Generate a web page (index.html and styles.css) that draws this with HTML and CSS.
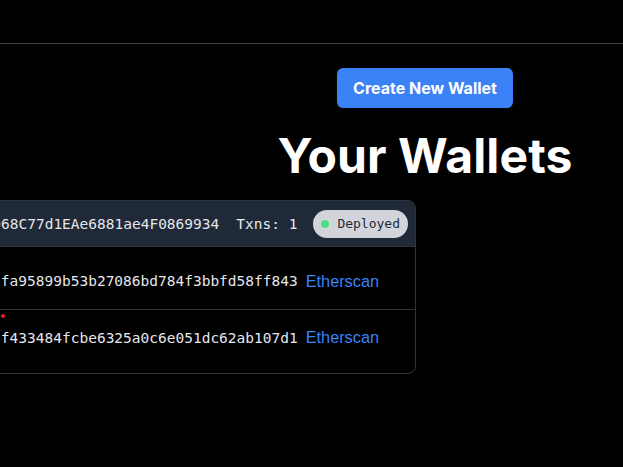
FILE: index.html
```html
<!DOCTYPE html>
<html>
<head>
<meta charset="utf-8">
<link rel="stylesheet" href="styles.css">
</head>
<body>
<header class="topbar"></header>
<main class="main">
  <button class="create-btn">Create New Wallet</button>
  <h1 class="title">Your Wallets</h1>
  <div class="list">
    <div class="card">
      <div class="card-head">
        <span class="addr">0x4a2F9b3E1c07D5a8e3B068C77d1EAe6881ae4F0869934</span>
        <span class="txns">Txns: 1</span>
        <span class="badge"><span class="dot"></span>Deployed</span>
      </div>
      <div class="row row-first">
        <span class="hash">0x7c1e3b9d20a4f6e58c1b2d9e0a37 fa95899b53b27086bd784f3bbfd58ff843</span>
        <a class="link" href="#">Etherscan</a>
      </div>
      <div class="row row-last">
        <span class="err"></span>
        <span class="hash">0x2b8d4e6a91c3f0b7d5e2a1c94e58 f433484fcbe6325a0c6e051dc62ab107d1</span>
        <a class="link" href="#">Etherscan</a>
      </div>
    </div>
  </div>
</main>
</body>
</html>
```
FILE: styles.css
```css
html, body {
  margin: 0;
  padding: 0;
  background: #000;
  overflow: hidden;
  height: 100%;
}
body {
  font-family: Inter, "Liberation Sans", sans-serif;
  color: #fff;
}
.topbar {
  height: 43px;
  border-bottom: 1px solid #3a434d;
}
.main {
  width: 850px;
  display: flex;
  flex-direction: column;
  align-items: center;
  padding-top: 24px;
}
.create-btn {
  background: #3b82f6;
  color: #fff;
  border: none;
  border-radius: 6px;
  font-family: Inter, "Liberation Sans", sans-serif;
  font-weight: 700;
  font-size: 16px;
  line-height: 24px;
  padding: 8px 16px;
  height: 40px;
}
.title {
  font-size: 48px;
  font-weight: 700;
  line-height: 48px;
  margin: 24px 0 20px;
  letter-spacing: 0.1px;
}
.list {
  align-self: flex-start;
  width: 416px;
  display: flex;
  justify-content: flex-end;
}
.card {
  flex-shrink: 0;
  width: 760px;
  border: 1px solid #2c3440;
  border-radius: 8px;
  overflow: hidden;
  font-family: "DejaVu Sans Mono", monospace;
  font-size: 14.5px;
  color: #e5e7eb;
}
.card-head {
  background: #1f2937;
  height: 45px;
  display: flex;
  align-items: center;
  justify-content: flex-end;
  padding: 0 7px 0 8px;
  gap: 17px;
  box-sizing: border-box;
}
.addr, .hash { white-space: pre; }
.badge {
  background: #d1d5db;
  color: #1f2937;
  border-radius: 14px;
  height: 28px;
  display: flex;
  align-items: center;
  gap: 8px;
  padding: 0 8px;
  font-size: 13px;
  margin-left: -1px;
}
.dot {
  width: 8px;
  height: 8px;
  border-radius: 50%;
  background: #4ade80;
}
.row {
  position: relative;
  height: 64px;
  display: flex;
  align-items: center;
  justify-content: flex-end;
  gap: 8px;
  padding-right: 36px;
  border-top: 1px solid #2c3440;
  box-sizing: border-box;
}
.row-first {
  height: 63px;
  padding-top: 6px;
}
.row-last {
  padding-bottom: 8px;
}
.link {
  font-family: "Liberation Sans", Arial, sans-serif;
  font-size: 16.3px;
  color: #3b82f6;
  text-decoration: none;
}
.err {
  position: absolute;
  top: 4px;
  right: 410px;
  width: 4px;
  height: 4px;
  border-radius: 50%;
  background: #e11d1d;
}
```
